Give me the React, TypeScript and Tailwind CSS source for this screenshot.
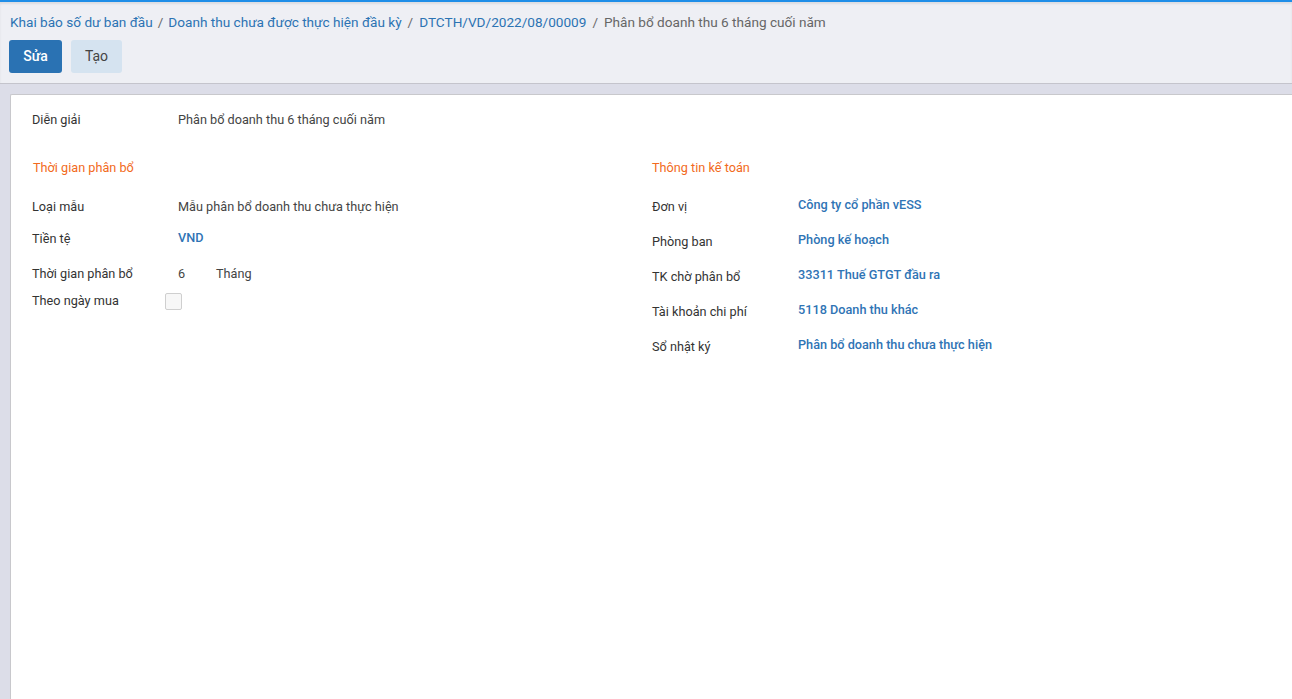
import React from "react";

const font = { fontFamily: "Roboto, 'Noto Sans', sans-serif" };

function Row({ label, value, link, h, valueClass = "" }: { label: string; value: React.ReactNode; link?: boolean; h: string; valueClass?: string }) {
  return (
    <div className={`flex items-center ${h}`}>
      <div className="w-[146px] shrink-0 text-[12.7px] text-[#333333]">{label}</div>
      <div className={`text-[12.7px] ${link ? "text-[#2f74b5] font-medium" : "text-[#444444]"} ${valueClass}`}>{value}</div>
    </div>
  );
}

export default function App() {
  return (
    <div className="w-[1292px] h-[699px] overflow-hidden bg-[#dcdde8] flex flex-col" style={font}>
      <div className="h-[2px] bg-[#1f8ee8] shrink-0" />
      <div className="bg-[#eeeff4] border-b border-[#c4c4cc] shrink-0 h-[82px] flex flex-col px-[9px] shadow-[inset_0_2px_2px_rgba(0,0,0,0.08)]">
        <div className="flex items-center h-[38px] pt-[2px] text-[13.6px] pl-[1px]">
          <span className="text-[#2c73b3]">Khai báo số dư ban đầu</span>
          <span className="mx-[5px] text-[#6b6b6b]">/</span>
          <span className="text-[#2c73b3]">Doanh thu chưa được thực hiện đầu kỳ</span>
          <span className="mx-[6px] text-[#6b6b6b]">/</span>
          <span className="text-[#2c73b3]">DTCTH/VD/2022/08/00009</span>
          <span className="mx-[6px] text-[#6b6b6b]">/</span>
          <span className="text-[#666666]">Phân bổ doanh thu 6 tháng cuối năm</span>
        </div>
        <div className="flex gap-[9px]">
          <button className="w-[53px] h-[33px] rounded-[3px] bg-[#2a72b3] text-white text-[14px] font-medium">Sửa</button>
          <button className="w-[51px] h-[33px] rounded-[3px] bg-[#d5e3f0] text-[#444444] text-[14px]">Tạo</button>
        </div>
      </div>
      <div className="flex-1 pt-[10px] pl-[10px]">
        <div className="h-full bg-white border-l border-t border-[#c8c8cc] rounded-tl-[2px] pl-[21px] pr-0">
          <div className="pt-[15px]">
            <Row label="Diễn giải" value="Phân bổ doanh thu 6 tháng cuối năm" h="h-[20px]" />
          </div>
          <div className="flex mt-[28px]">
            <div className="w-[620px] shrink-0">
              <div className="h-[20px] flex items-center text-[12.7px] text-[#f26a21] pl-[1px]">Thời gian phân bổ</div>
              <div className="mt-[19px]">
                <Row label="Loại mẫu" value="Mẫu phân bổ doanh thu chưa thực hiện" h="h-[20px]" />
              </div>
              <div className="mt-[12px]">
                <Row label="Tiền tệ" value="VND" link h="h-[20px]" valueClass="-mt-[2px]" />
              </div>
              <div className="mt-[15px]">
                <Row label="Thời gian phân bổ" value={<span className="flex"><span className="w-[38px]">6</span><span>Tháng</span></span>} h="h-[20px]" />
              </div>
              <div className="mt-[7px] flex items-center h-[20px]">
                <div className="w-[133px] shrink-0 text-[12.7px] text-[#333333]">Theo ngày mua</div>
                <div className="w-[17px] h-[17px] border border-[#cfcfcf] bg-[#f7f7f7] rounded-[2px] mt-[1px]" />
              </div>
            </div>
            <div className="flex-1">
              <div className="h-[20px] flex items-center text-[12.7px] text-[#f26a21]">Thông tin kế toán</div>
              <div className="mt-[19px] flex flex-col gap-[15px]">
                <Row label="Đơn vị" value="Công ty cổ phần vESS" link h="h-[20px]" valueClass="-mt-[4px]" />
                <Row label="Phòng ban" value="Phòng kế hoạch" link h="h-[20px]" valueClass="-mt-[4px]" />
                <Row label="TK chờ phân bổ" value="33311 Thuế GTGT đầu ra" link h="h-[20px]" valueClass="-mt-[4px]" />
                <Row label="Tài khoản chi phí" value="5118 Doanh thu khác" link h="h-[20px]" valueClass="-mt-[4px]" />
                <Row label="Sổ nhật ký" value="Phân bổ doanh thu chưa thực hiện" link h="h-[20px]" valueClass="-mt-[4px]" />
              </div>
            </div>
          </div>
        </div>
      </div>
    </div>
  );
}
